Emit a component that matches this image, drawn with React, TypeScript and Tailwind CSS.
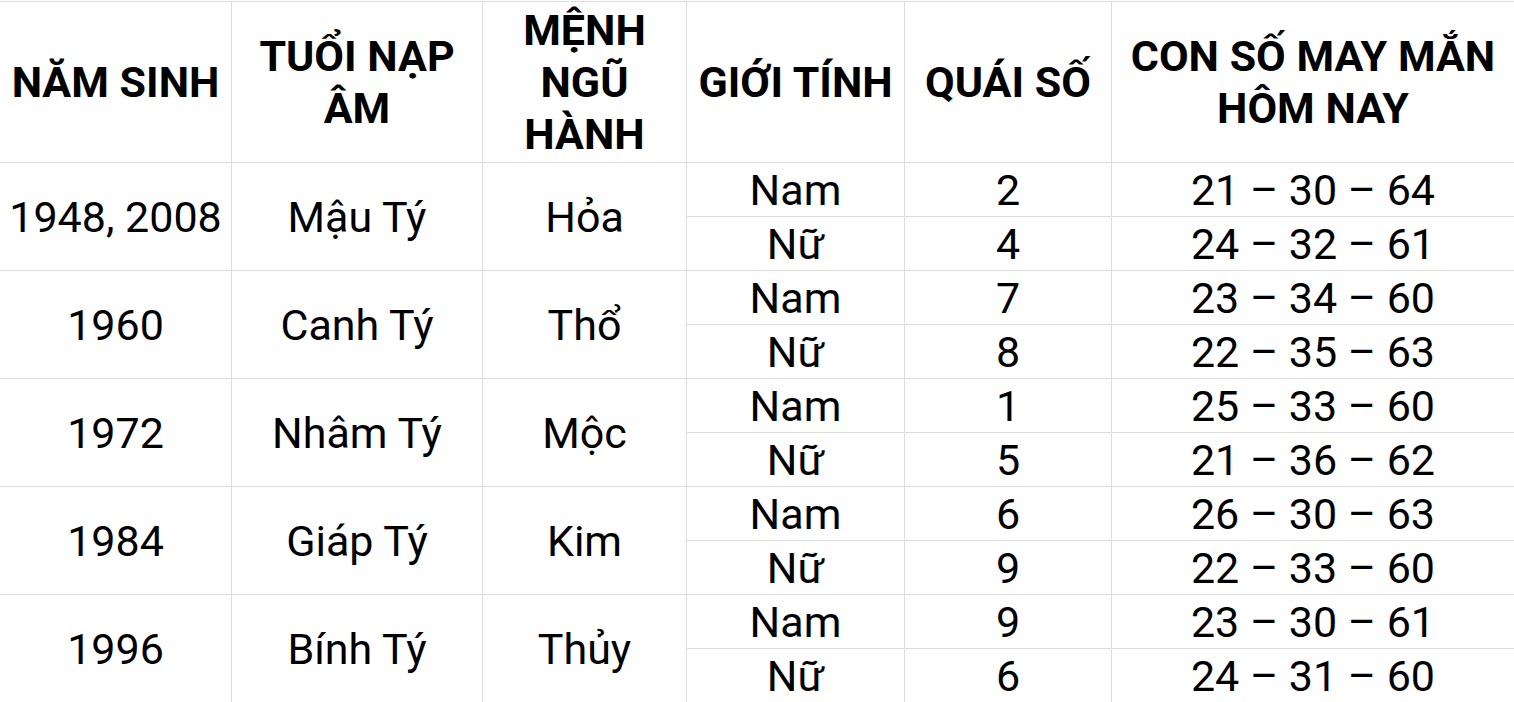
const groups = [
  { year: "1948, 2008", tuoi: "Mậu Tý", menh: "Hỏa", rows: [["Nam", "2", "21 – 30 – 64"], ["Nữ", "4", "24 – 32 – 61"]] },
  { year: "1960", tuoi: "Canh Tý", menh: "Thổ", rows: [["Nam", "7", "23 – 34 – 60"], ["Nữ", "8", "22 – 35 – 63"]] },
  { year: "1972", tuoi: "Nhâm Tý", menh: "Mộc", rows: [["Nam", "1", "25 – 33 – 60"], ["Nữ", "5", "21 – 36 – 62"]] },
  { year: "1984", tuoi: "Giáp Tý", menh: "Kim", rows: [["Nam", "6", "26 – 30 – 63"], ["Nữ", "9", "22 – 33 – 60"]] },
  { year: "1996", tuoi: "Bính Tý", menh: "Thủy", rows: [["Nam", "9", "23 – 30 – 61"], ["Nữ", "6", "24 – 31 – 60"]] },
];

const th = "border border-[#dddddd] font-bold text-[43px] leading-[52px] text-center align-middle px-2";
const td = "border border-[#dddddd] text-[43px] leading-[52px] text-center align-middle p-0";

export default function App() {
  return (
    <div className="w-[1514px] h-[702px] overflow-hidden bg-white pt-px" style={{ fontFamily: "Roboto, 'Noto Sans', sans-serif" }}>
      <table className="table-fixed border-collapse ml-[-1px] w-[1515px] text-black">
        <colgroup>
          <col className="w-[232px]" />
          <col className="w-[251px]" />
          <col className="w-[204px]" />
          <col className="w-[218px]" />
          <col className="w-[207px]" />
          <col className="w-[403px]" />
        </colgroup>
        <thead>
          <tr className="h-[161px]">
            <th className={th}>NĂM SINH</th>
            <th className={th}>TUỔI NẠP ÂM</th>
            <th className={th}>MỆNH NGŨ HÀNH</th>
            <th className={th}>GIỚI TÍNH</th>
            <th className={th}>QUÁI SỐ</th>
            <th className={th}>CON SỐ MAY MẮN HÔM NAY</th>
          </tr>
        </thead>
        <tbody>
          {groups.map((g) =>
            g.rows.map((r, i) => (
              <tr key={g.year + i} className="h-[54px]">
                {i === 0 && (
                  <>
                    <td rowSpan={2} className={td}>{g.year}</td>
                    <td rowSpan={2} className={td}>{g.tuoi}</td>
                    <td rowSpan={2} className={td}>{g.menh}</td>
                  </>
                )}
                <td className={td}>{r[0]}</td>
                <td className={td}>{r[1]}</td>
                <td className={td}>{r[2]}</td>
              </tr>
            ))
          )}
        </tbody>
      </table>
    </div>
  );
}
